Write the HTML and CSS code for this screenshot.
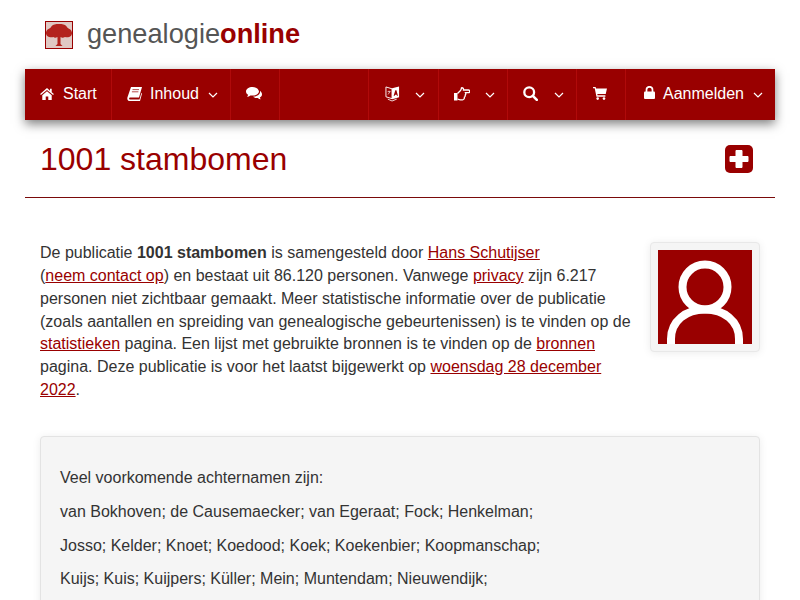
FILE: index.html
```html
<!DOCTYPE html>
<html lang="nl">
<head>
    <meta charset="UTF-8">
    <meta name="viewport" content="width=device-width, initial-scale=1.0">
    <title>1001 stambomen</title>
    <link rel="stylesheet" href="styles.css">
</head>
<body>
    <div class="page">
        <header class="brand">
            <svg class="brand-logo" viewBox="0 0 28 28">
                <defs><filter id="soft"><feGaussianBlur stdDeviation="0.5"/></filter></defs>
                <rect width="28" height="28" fill="#e0c8c3"/>
                <path d="M1 12C1 8 5 8 6 6c2-3 5-3 8-3s6 0 8 3c1 2 5 2 5 6 0 4-4 5-7 4-2 1-3 1-4.500 0v7l2 2H10.500l2-2v-7c-2 1-3 1-4 0-3 1-7.500 0-7.500-4z" fill="#b3201a" filter="url(#soft)"/>
                <rect x="0.5" y="0.5" width="27" height="27" fill="none" stroke="#990000"/>
            </svg>
            <span class="brand-name">genealogie<b>online</b></span>
        </header>

        <nav class="navbar">
            <a class="nav-item">
                <svg class="icon" viewBox="0 0 16 14"><path d="M8 0 0 7l.9 1.100L8 2.200l7.100 5.900L16 7l-2.500-2.100V1h-2v2.200z"/><path d="M2.500 8.400V14h4v-4h3v4h4V8.400L8 3.700z"/></svg>
                <span>Start</span>
            </a>
            <a class="nav-item">
                <svg class="icon icon-book" viewBox="0 0 15 14"><path d="M4 0h11l-3 10.500H3C2 10.500 1.600 12.500 3 12.500h9.500l1.800-6.500.7.500-2 7.500H2.500C.5 14 0 12 .4 10.500z"/><path d="M5.500 2.600h6.500M4.900 4.800h6.500" fill="none" stroke="#990000" stroke-width=".7"/></svg>
                <span>Inhoud</span>
                <svg class="chevron" viewBox="0 0 10 6"><path d="M1 1l4 4 4-4"/></svg>
            </a>
            <a class="nav-item">
                <svg class="icon icon-wide" viewBox="0 0 16 13"><path d="M6.500 0C3 0 0 1.900 0 4.400c0 1.400.9 2.600 2.200 3.400-.2.800-.7 1.500-1.200 2 1.300-.1 2.500-.6 3.400-1.400.7.100 1.400.2 2.100.2 3.600 0 6.500-2 6.500-4.200S10.100 0 6.500 0z"/><path d="M14 3.800c.1.200.1.400.1.700 0 3-3.300 5.100-7.100 5.200.9.800 2.200 1.300 3.600 1.300.4 0 .8 0 1.200-.1.800.8 1.800 1.300 3 1.400-.4-.4-.8-1.100-1-1.800 1.300-.6 2.200-1.800 2.200-3 0-1.500-.8-2.800-2-3.700z"/></svg>
            </a>
            <div class="nav-item"></div>
            <a class="nav-item">
                <svg class="icon icon-lang" viewBox="0 0 16 17"><path d="M1 1.500l6.500 2v10.500L1 12z" fill="none" stroke="#fff"/><path d="M7.500 3 15 1v11.500L7.500 14.500z"/><path d="M9.200 11l1.800-6h1.200l1.600 6h-1.100l-.3-1.300h-1.600l-.4 1.300z" fill="#990000"/><path d="M2.800 6.500h3M4.300 5.500v1M3.300 9.500l2-3" fill="none" stroke="#fff" stroke-width=".7"/><path d="M3 14.500l4.500 2 5-2" fill="none" stroke="#fff" stroke-width=".9"/></svg>
                <svg class="chevron" viewBox="0 0 10 6"><path d="M1 1l4 4 4-4"/></svg>
            </a>
            <a class="nav-item">
                <svg class="icon icon-hand" viewBox="0 0 16 14"><path d="M0 6h3.500v7.500H0z"/><path d="M3.500 6.500l3-3C7.200 2.700 7.300 2 7.500.8 9 .6 9.800 1.500 9.500 3h5c1.700 0 1.700 2.600 0 2.600h-3c.5 1 .3 1.900-.3 2.400.2 1 -.2 1.800-.8 2.200.1 1.300-.6 2.600-1.800 2.600H6.500c-1 0-2-.4-3-.8" fill="none" stroke="#fff" stroke-width="1.300"/></svg>
                <svg class="chevron" viewBox="0 0 10 6"><path d="M1 1l4 4 4-4"/></svg>
            </a>
            <a class="nav-item">
                <svg class="icon icon-search" viewBox="0 0 15 15"><circle cx="6.200" cy="6.200" r="4.900" fill="none" stroke="#fff" stroke-width="2.300"/><path d="M9.800 9.800l4 4" fill="none" stroke="#fff" stroke-width="2.600" stroke-linecap="round"/></svg>
                <svg class="chevron" viewBox="0 0 10 6"><path d="M1 1l4 4 4-4"/></svg>
            </a>
            <a class="nav-item">
                <svg class="icon icon-cart" viewBox="0 0 15 14"><path d="M0 0h2.800l.4 1.600H15l-1.300 6H4.600l.3 1.400h8.400v1.400H3.700L1.800 1.400H0z"/><circle cx="5" cy="12.500" r="1.400"/><circle cx="11.800" cy="12.500" r="1.400"/></svg>
            </a>
            <a class="nav-item">
                <svg class="icon icon-lock" viewBox="0 0 11 13"><rect x="0" y="5.500" width="11" height="7.500" rx="1"/><path d="M2.500 6V3.800a3 3 0 0 1 6 0V6" fill="none" stroke="#fff" stroke-width="1.700"/></svg>
                <span>Aanmelden</span>
                <svg class="chevron" viewBox="0 0 10 6"><path d="M1 1l4 4 4-4"/></svg>
            </a>
        </nav>

        <div class="title-row">
            <h1>1001 stambomen</h1>
            <svg class="plus-box" viewBox="0 0 28 28"><rect width="28" height="28" rx="5" fill="#990000"/><path d="M11.500 5h5c.5 0 1 .5 1 1v5h5c.5 0 1 .5 1 1v4c0 .5-.5 1-1 1h-5v5c0 .5-.5 1-1 1h-5c-.5 0-1-.5-1-1v-5h-5c-.5 0-1-.5-1-1v-4c0-.5.5-1 1-1h5V6c0-.5.500-1 1-1z" fill="#fff"/></svg>
        </div>
        <hr class="rule">

        <div class="intro">
            <p>De publicatie <b>1001 stambomen</b> is samengesteld door <a href="#">Hans Schutijser</a> <span class="nowrap">(<a href="#">neem contact op</a>)</span> en bestaat uit 86.120 personen. Vanwege <a href="#">privacy</a> zijn 6.217 personen niet zichtbaar gemaakt. Meer statistische informatie over de publicatie (zoals aantallen en spreiding van genealogische gebeurtenissen) is te vinden op de <a href="#">statistieken</a> pagina. Een lijst met gebruikte bronnen is te vinden op de <a href="#">bronnen</a> pagina. Deze publicatie is voor het laatst bijgewerkt op <a href="#">woensdag 28 december 2022</a>.</p>
            <div class="thumbnail">
                <svg viewBox="0 0 94 94">
                    <rect width="94" height="94" fill="#990000"/>
                    <circle cx="47" cy="37" r="22.500" fill="none" stroke="#fff" stroke-width="8"/>
                    <path d="M13 94v-5C13 71 28 59.500 47 59.500s34 11.500 34 29.500v5" fill="none" stroke="#fff" stroke-width="8"/>
                </svg>
            </div>
        </div>

        <div class="well">
            <p>Veel voorkomende achternamen zijn:</p>
            <p>van Bokhoven; de Causemaecker; van Egeraat; Fock; Henkelman;</p>
            <p>Josso; Kelder; Knoet; Koedood; Koek; Koekenbier; Koopmanschap;</p>
            <p>Kuijs; Kuis; Kuijpers; Küller; Mein; Muntendam; Nieuwendijk;</p>
        </div>
    </div>
</body>
</html>
```

FILE: styles.css
```css
* {
    box-sizing: border-box;
}
body {
    margin: 0;
    font-family: "Liberation Sans", Arial, sans-serif;
    font-size: 16px;
    line-height: 1.42857;
    color: #333;
    background: white;
}
a {
    color: #990000;
}
.nowrap {
    white-space: nowrap;
}
.page {
    padding: 0 25px;
}
.brand {
    display: flex;
    align-items: center;
    gap: 14px;
    height: 69px;
    padding-left: 20px;
}
.brand-logo {
    width: 28px;
    height: 28px;
}
.brand-name {
    font-size: 27.2px;
    color: #555;
}
.brand-name b {
    color: #990000;
}
.navbar {
    display: grid;
    grid-template-columns: 87px 119px 49px 1fr 70px 69px 69px 49px 149px;
    height: 51px;
    background: #990000;
    box-shadow: 0 4px 10px rgba(0,0,0,0.5);
}
.nav-item {
    display: flex;
    align-items: center;
    padding-left: 15px;
    color: white;
    border-right: 1px solid #b00a0a;
}
.nav-item:last-child {
    border-right: none;
}
.icon {
    width: 14px;
    height: 12px;
    margin-right: 9px;
    margin-bottom: 2px;
    fill: white;
}
.icon-book {
    width: 15px;
    height: 14px;
    margin-right: 8px;
}
.icon-wide {
    width: 16px;
    height: 13px;
}
.icon-lang {
    width: 15px;
    height: 17px;
    margin-left: 1px;
    margin-right: 6px;
}
.icon-hand {
    width: 16px;
    height: 14px;
    margin-right: 6px;
}
.icon-search {
    width: 15px;
    height: 15px;
    margin-right: 7px;
}
.icon-cart {
    width: 14px;
    height: 13px;
    margin-left: 1px;
}
.icon-lock {
    width: 11px;
    height: 13px;
    margin-left: 3px;
    margin-right: 8px;
    margin-bottom: 4px;
}
.chevron {
    width: 10px;
    height: 6px;
    margin-left: 9px;
    fill: none;
    stroke: white;
    stroke-width: 1.2;
}
.title-row {
    display: flex;
    justify-content: space-between;
    align-items: center;
    height: 77px;
    padding: 0 22px 0 15px;
}
h1 {
    margin: 2px 0 0;
    font-size: 32px;
    font-weight: normal;
    line-height: 1.1;
    color: #990000;
}
.plus-box {
    width: 28px;
    height: 28px;
}
.rule {
    margin: 0;
    border: none;
    border-top: 1px solid #7a0a0a;
}
.intro {
    display: flex;
    gap: 10px;
    padding: 44px 15px 0;
}
.intro p {
    flex: 1;
    margin: 0;
}
.thumbnail {
    flex: none;
    width: 110px;
    height: 110px;
    padding: 7px;
    background: #f5f5f5;
    border: 1px solid #e8e8e8;
    border-radius: 4px;
    box-shadow: 0 1px 8px rgba(0,0,0,0.08);
}
.thumbnail svg {
    display: block;
    width: 94px;
    height: 94px;
}
.well {
    margin: 34.500px 15px 0;
    padding: 29.500px 19px;
    background: #f5f5f5;
    border: 1px solid #e3e3e3;
    border-radius: 4px;
    box-shadow: 0 1px 8px rgba(0,0,0,0.08);
}
.well p {
    margin: 0 0 11px;
}
```
